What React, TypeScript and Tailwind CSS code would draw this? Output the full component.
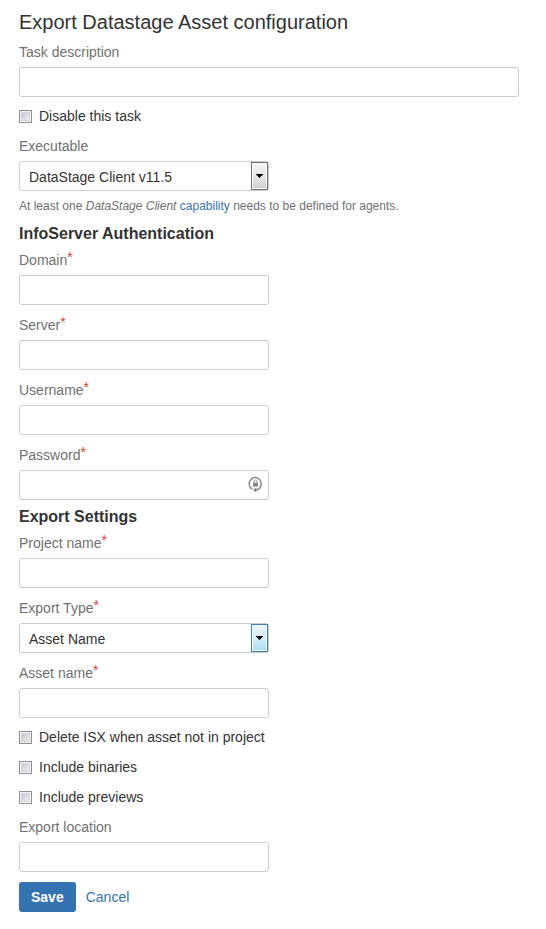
import { useId, type ReactNode } from "react";

const controlClass =
  "block h-[30px] w-full rounded-[3px] border border-[#cccccc] bg-white text-sm text-[#333333] outline-none focus:border-[#3b73af]";

function FieldLabel({ htmlFor, required, children }: { htmlFor: string; required?: boolean; children: ReactNode }) {
  return (
    <label htmlFor={htmlFor} className="mb-[5px] block text-[14px] leading-5 text-[#707070]">
      {children}
      {required && <span className="align-[3px] leading-none text-[#d04437]">*</span>}
    </label>
  );
}

type TextFieldProps = { label: string; type?: string; required?: boolean; wide?: boolean; icon?: ReactNode };

function TextField({ label, type = "text", required, wide, icon }: TextFieldProps) {
  const id = useId();
  return (
    <div className={wide ? "w-full max-w-[500px]" : "w-full max-w-[250px]"}>
      <FieldLabel htmlFor={id} required={required}>
        {label}
      </FieldLabel>
      <div className="relative">
        <input id={id} type={type} required={required} className={`${controlClass} px-[5px]`} />
        {icon}
      </div>
    </div>
  );
}

type SelectFieldProps = { label: string; option: string; required?: boolean; highlighted?: boolean };

function SelectField({ label, option, required, highlighted }: SelectFieldProps) {
  const id = useId();
  const arrowColours = highlighted
    ? "border-[#3c7fb1] from-[#eaf6fd] via-[#d5eefb] to-[#a9dbf5]"
    : "border-[#707070] from-[#f3f3f3] via-[#e8e8e8] to-[#cfcfcf]";
  return (
    <div className="w-full max-w-[250px]">
      <FieldLabel htmlFor={id} required={required}>
        {label}
      </FieldLabel>
      <div className="relative">
        <select id={id} className={`${controlClass} appearance-none pt-[2px] pr-5 pl-[9px]`}>
          <option>{option}</option>
        </select>
        <span
          className={`pointer-events-none absolute top-px right-px bottom-px flex w-[17px] items-center justify-center border bg-linear-to-b shadow-[inset_0_0_0_1px_#fcfcfc] ${arrowColours}`}
        >
          <svg width="7" height="4" viewBox="0 0 7 4" shapeRendering="crispEdges" aria-hidden="true">
            <path d="M0 0h7v1H6v1H5v1H4v1H3V3H2V2H1V1H0z" fill="#000" />
          </svg>
        </span>
      </div>
    </div>
  );
}

function CheckboxField({ label }: { label: string }) {
  return (
    <label className="flex w-fit items-center gap-[7px] text-[14px] leading-[19px] text-[#333333]">
      <input
        type="checkbox"
        className="size-[13px] shrink-0 appearance-none border border-[#8e8f8f] bg-linear-to-br from-[#b9bfc8] to-[#f8f8f8] shadow-[inset_0_0_0_1px_#f4f4f4,inset_0_0_0_2px_#d2d5d9] checked:from-[#3b73af] checked:to-[#3b73af]"
      />
      {label}
    </label>
  );
}

function SectionHeading({ children }: { children: ReactNode }) {
  return <h3 className="my-[-3px] text-[16px] leading-[19px] font-bold text-[#333333]">{children}</h3>;
}

function PasswordIcon() {
  return (
    <svg
      className="pointer-events-none absolute top-[6px] right-[6px]"
      width="15"
      height="17"
      viewBox="0 0 15 17"
      fill="none"
      aria-hidden="true"
    >
      <path d="M4.2 13.3A6 6.3 0 1 1 11.2 12.6Q10 13.9 7.6 14.1" stroke="#8a8a8a" strokeWidth="1.5" />
      <path d="M8.3 11.6v5L5 14.1z" fill="#858585" />
      <rect x="5" y="6.8" width="5" height="3.7" fill="#858585" />
      <path d="M6.1 7V5.5a1.4 1.4 0 0 1 2.8 0V7" stroke="#8a8a8a" />
    </svg>
  );
}

export default function App() {
  return (
    <main className="w-full bg-white px-[19px] pt-[10px] pb-4 font-['Liberation_Sans',Arial,sans-serif]">
      <h2 className="mb-2 text-[20px] leading-6 text-[#333333]">Export Datastage Asset configuration</h2>
      <form className="flex flex-col gap-[10px]" onSubmit={(event) => event.preventDefault()}>
        <TextField label="Task description" wide />
        <CheckboxField label="Disable this task" />
        <div>
          <SelectField label="Executable" option="DataStage Client v11.5" />
          <p className="mt-[5px] text-[12px] leading-[21px] text-[#707070]">
            At least one <em>DataStage Client</em>{" "}
            <a href="#capability" className="text-[#3b73af]">
              capability
            </a>{" "}
            needs to be defined for agents.
          </p>
        </div>
        <SectionHeading>InfoServer Authentication</SectionHeading>
        <TextField label="Domain" required />
        <TextField label="Server" required />
        <TextField label="Username" required />
        <TextField label="Password" type="password" required icon={<PasswordIcon />} />
        <SectionHeading>Export Settings</SectionHeading>
        <TextField label="Project name" required />
        <SelectField label="Export Type" option="Asset Name" required highlighted />
        <TextField label="Asset name" required />
        <div className="flex flex-col gap-[11px]">
          <CheckboxField label="Delete ISX when asset not in project" />
          <CheckboxField label="Include binaries" />
          <CheckboxField label="Include previews" />
        </div>
        <TextField label="Export location" />
        <div className="flex items-center gap-[10px] text-[14px]">
          <button type="submit" className="h-[30px] rounded-[3px] bg-[#3572b0] px-3 font-bold text-white">
            Save
          </button>
          <a href="#cancel" className="text-[#3572b0]">
            Cancel
          </a>
        </div>
      </form>
    </main>
  );
}
